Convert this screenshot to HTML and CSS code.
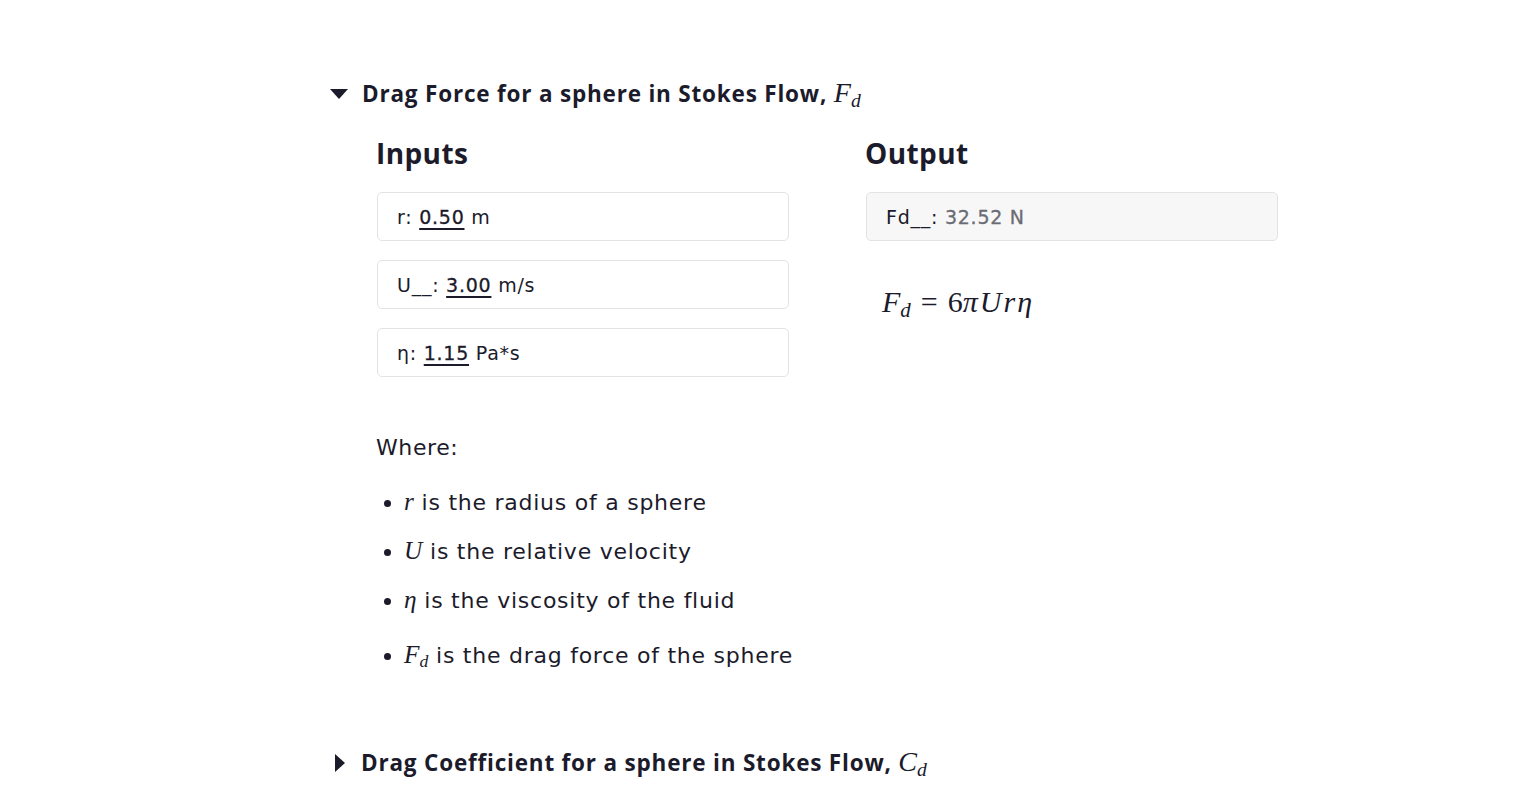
FILE: index.html
```html
<!DOCTYPE html>
<html>
<head>
<meta charset="utf-8">
<link rel="stylesheet" href="styles.css">
</head>
<body>
<div class="page">
  <details class="section" open>
    <summary class="summary"><span class="tri down"></span><span class="stitle">Drag Force for a sphere in Stokes Flow, <span class="m">F<sub>d</sub></span></span></summary>
    <div class="content">
      <div class="cols">
        <div class="col">
          <h2 class="h">Inputs</h2>
          <div class="field">r: <span class="val">0.50</span> m</div>
          <div class="field">U__: <span class="val">3.00</span> m/s</div>
          <div class="field">η: <span class="val">1.15</span> Pa*s</div>
        </div>
        <div class="col">
          <h2 class="h">Output</h2>
          <div class="field out">Fd__: <span class="res">32.52 N</span></div>
          <div class="formula"><span class="m">F<sub>d</sub></span><span class="op">=</span><span class="up">6</span><span class="m">π</span><span class="m">U</span><span class="m">r</span><span class="m">η</span></div>
        </div>
      </div>
      <p class="where">Where:</p>
      <ul class="list">
        <li><span class="m">r</span> is the radius of a sphere</li>
        <li><span class="m">U</span> is the relative velocity</li>
        <li><span class="m">η</span> is the viscosity of the fluid</li>
        <li class="tall"><span class="m">F<sub>d</sub></span> is the drag force of the sphere</li>
      </ul>
    </div>
  </details>
  <details class="section second">
    <summary class="summary"><span class="tri right"></span><span class="stitle">Drag Coefficient for a sphere in Stokes Flow, <span class="m">C<sub>d</sub></span></span></summary>
  </details>
</div>
</body>
</html>
```
FILE: styles.css
```css
html, body {
  margin: 0;
  padding: 0;
  background: #ffffff;
}
body {
  font-family: "Open Sans", "Inter", sans-serif;
  color: #1b1b2b;
}
.page {
  padding: 77px 0 0 330px;
  width: 960px;
}
.summary {
  list-style: none;
  display: flex;
  align-items: center;
  cursor: pointer;
  height: 34px;
}
.summary::-webkit-details-marker { display: none; }
.tri {
  display: inline-block;
  width: 0;
  height: 0;
  margin-right: 14px;
}
.tri.down {
  border-left: 9px solid transparent;
  border-right: 9px solid transparent;
  border-top: 10px solid #1b1b2b;
}
.tri.right {
  margin-left: 5px;
  margin-right: 16px;
  border-top: 9px solid transparent;
  border-bottom: 9px solid transparent;
  border-left: 10px solid #1b1b2b;
}
.stitle {
  font-size: 22.5px;
  font-weight: 700;
  letter-spacing: 0.8px;
}
.m {
  font-family: "Liberation Serif", "DejaVu Serif", serif;
  font-style: italic;
  font-weight: 400;
  font-size: 1.25em;
  letter-spacing: 0;
}
.m sub {
  font-size: 0.7em;
  vertical-align: -0.25em;
}
.content {
  padding-left: 46px;
}
.cols {
  display: grid;
  grid-template-columns: 489px 489px;
  margin-top: 24px;
}
.h {
  font-size: 28px;
  font-weight: 700;
  margin: 0 0 21px 0;
  line-height: 36px;
  letter-spacing: 0.4px;
}
.field {
  width: 412px;
  height: 49px;
  box-sizing: border-box;
  border: 1px solid #e3e3e6;
  border-radius: 5px;
  margin-left: 1px;
  margin-bottom: 19px;
  padding-left: 19px;
  display: flex;
  align-items: center;
  font-family: "DejaVu Sans", sans-serif;
  font-size: 19px;
  letter-spacing: 0.75px;
  white-space: pre;
}
.val {
  text-decoration: underline;
  text-underline-offset: 4px;
  text-decoration-thickness: 2px;
  -webkit-text-stroke: 0.3px #1b1b2b;
}
.field.out {
  background: #f7f7f8;
}
.res {
  color: #6b6b73;
  -webkit-text-stroke: 0.3px #6b6b73;
}
.formula {
  margin: 44px 0 0 17px;
  font-size: 24px;
  display: flex;
  align-items: baseline;
}
.formula .up {
  font-family: "Liberation Serif", "DejaVu Serif", serif;
  font-size: 1.25em;
}
.formula .op {
  font-family: "Liberation Serif", "DejaVu Serif", serif;
  font-size: 1.25em;
  margin: 0 10px;
}
.formula .m + .m { margin-left: 2px; }
.where {
  font-family: "DejaVu Sans", sans-serif;
  font-size: 22px;
  letter-spacing: 0.6px;
  margin: 37px 0 0 0;
  line-height: 30px;
}
.list {
  margin: 23px 0 0 0;
  padding-left: 28px;
  font-family: "DejaVu Sans", sans-serif;
  font-size: 22px;
  letter-spacing: 0.75px;
}
.list li {
  line-height: 30px;
  margin-bottom: 17px;
}
.list li .m { font-size: 1.15em; }
.list li.tall {
  margin-top: 23px;
}
.second {
  margin-top: 70px;
}
```
